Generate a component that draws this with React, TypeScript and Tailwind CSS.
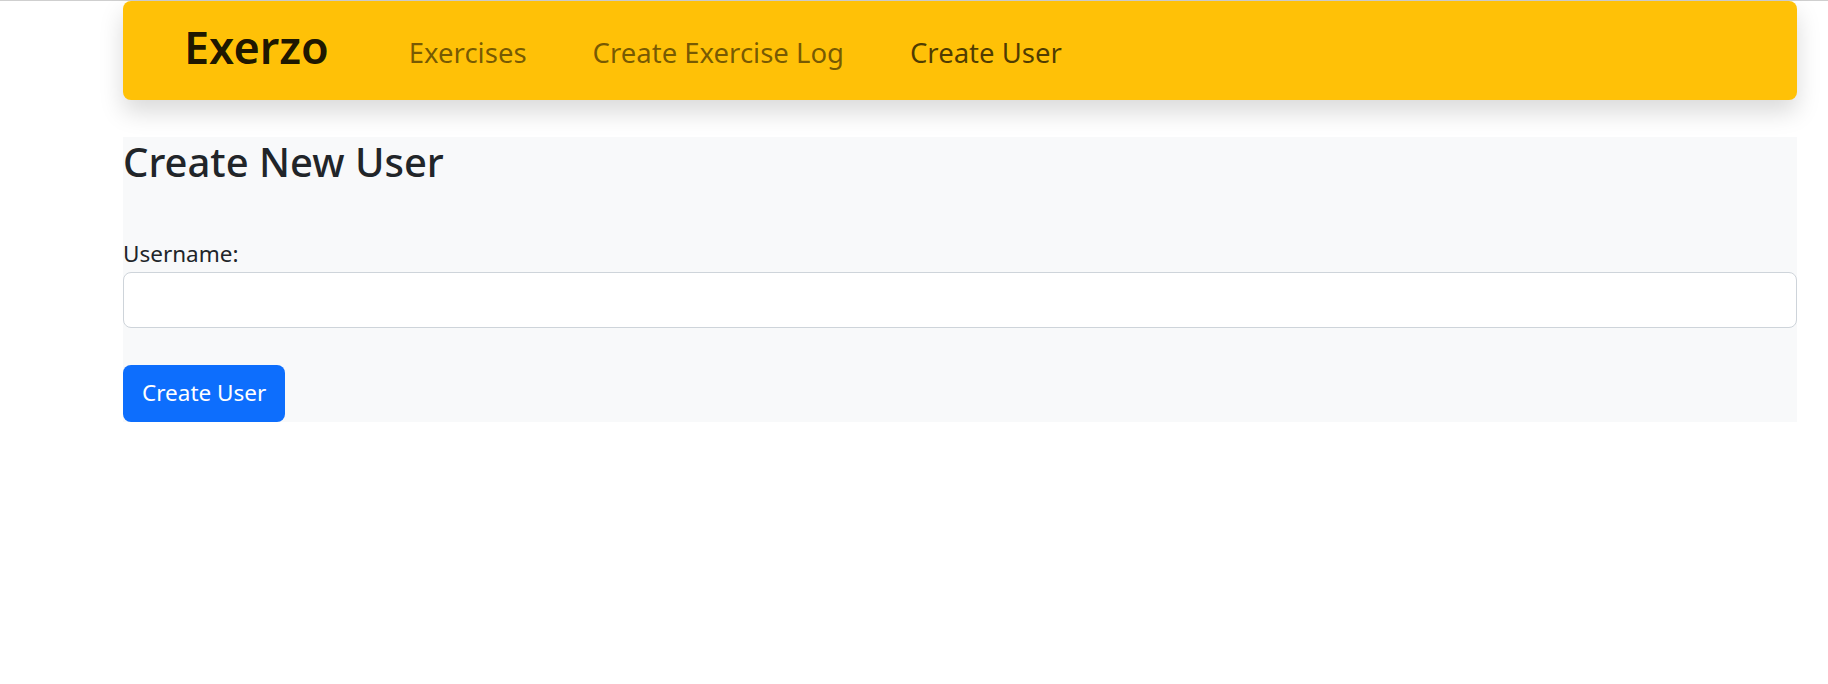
const links = [
  { label: 'Exercises', active: false },
  { label: 'Create Exercise Log', active: false },
  { label: 'Create User', active: true },
];

function Navbar() {
  return (
    <nav className="flex h-[99px] items-center rounded-[8px] bg-[#ffc107] pl-[61px] shadow-[0_12px_24px_rgba(0,0,0,0.15)]">
      <a href="#" className="mr-[80px] mb-[8px] text-[45px] font-semibold leading-none text-black/90">
        Exerzo
      </a>
      <ul className="mt-[4px] flex gap-[66px]">
        {links.map(l => (
          <li key={l.label}>
            <a
              href="#"
              className={
                l.active
                  ? 'text-[27.5px] leading-[45px] text-black/70'
                  : 'text-[27.5px] leading-[45px] text-black/55'
              }
            >
              {l.label}
            </a>
          </li>
        ))}
      </ul>
    </nav>
  );
}

function CreateUser() {
  return (
    <div className="mt-[37px] bg-[#f8f9fa]">
      <h3 className="text-[40px] font-medium leading-[50px] text-[#212529]">Create New User</h3>
      <form onSubmit={e => e.preventDefault()}>
        <label className="mt-[49px] block text-[22.5px] leading-[36px] text-[#212529]">Username:</label>
        <input
          type="text"
          className="block h-[56px] w-full rounded-[8px] border border-[#ced4da] bg-white px-[18px] text-[22.5px] focus:outline-none"
        />
        <button
          type="submit"
          className="mt-[37px] h-[57px] rounded-[8px] bg-[#0d6efd] px-[19px] text-[22.5px] leading-none text-white"
        >
          Create User
        </button>
      </form>
    </div>
  );
}

export default function App() {
  return (
    <div className="min-h-screen border-t border-[#cfcfcf] bg-white font-['Noto_Sans','Open_Sans',sans-serif]">
      <div className="pl-[123px] pr-[31px]">
        <Navbar />
        <CreateUser />
      </div>
    </div>
  );
}
